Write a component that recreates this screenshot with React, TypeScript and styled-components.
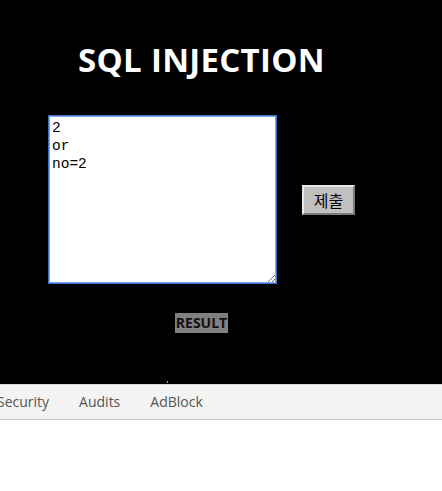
import { useEffect, useRef } from "react";
import styled, { createGlobalStyle } from "styled-components";

const GlobalStyle = createGlobalStyle`
  html, body {
    margin: 0;
    padding: 0;
    background: #ffffff;
  }
  #root {
    width: 442px;
    height: 491px;
    overflow: hidden;
  }
`;

const Page = styled.div`
  display: flex;
  flex-direction: column;
  width: 442px;
  height: 491px;
`;

const Stage = styled.div`
  background: #000000;
  height: 384px;
  flex-shrink: 0;
`;

const Column = styled.div`
  width: 403px;
  display: flex;
  flex-direction: column;
  align-items: center;
`;

const Title = styled.h1`
  margin: 40px 0 0;
  color: #ffffff;
  font-family: "Open Sans", "Noto Sans", sans-serif;
  font-weight: 700;
  font-size: 33px;
  line-height: 40px;
  letter-spacing: 0.3px;
`;

const FormRow = styled.div`
  margin-top: 35px;
  display: flex;
  align-items: center;
  gap: 25px;
`;

const Query = styled.textarea`
  box-sizing: border-box;
  width: 229px;
  height: 169px;
  margin: 0;
  padding: 3px 3px;
  border: 1px solid #3c70c8;
  box-shadow: inset 0 0 0 1px #7ea8e6;
  background: #ffffff;
  color: #000000;
  caret-color: #000000;
  font-family: "Liberation Mono", "DejaVu Sans Mono", monospace;
  font-size: 14.5px;
  line-height: 18px;
  outline: none;
`;

const Submit = styled.button`
  box-sizing: border-box;
  width: 53px;
  height: 30px;
  padding: 0;
  background: #c0c0c0;
  border: 2px solid;
  border-color: #e8e8e8 #7a7a7a #7a7a7a #e8e8e8;
  color: #000000;
  font-family: "Noto Sans CJK KR", sans-serif;
  font-size: 16px;
  line-height: 1;
`;

const Result = styled.span`
  margin-top: 29px;
  background: #808080;
  color: #111111;
  font-family: "Open Sans", "Noto Sans", sans-serif;
  font-weight: 700;
  font-size: 14px;
  line-height: 20px;
  padding: 0 1px;
`;

const Caret = styled.div`
  margin: 48px 0 0 -68px;
  width: 1px;
  height: 2px;
  background: #6fd13a;
`;

const TabBar = styled.div`
  height: 34px;
  background: #f3f3f3;
  border-top: 1px solid #dcdcdc;
  border-bottom: 1px solid #cccccc;
  display: flex;
  align-items: center;
  margin-left: -18px;
  flex-shrink: 0;
`;

const Tab = styled.span`
  padding: 0 15px;
  color: #555555;
  font-family: "Open Sans", "Noto Sans", sans-serif;
  font-size: 14px;
  line-height: 20px;
`;

const Blank = styled.div`
  flex: 1;
  background: #ffffff;
`;

export default function App() {
  const queryRef = useRef<HTMLTextAreaElement>(null);

  useEffect(() => {
    const el = queryRef.current;
    if (el) {
      el.focus();
      el.setSelectionRange(el.value.length, el.value.length);
    }
  }, []);

  return (
    <>
      <GlobalStyle />
      <Page>
        <Stage>
          <Column>
            <Title>SQL INJECTION</Title>
            <FormRow>
              <Query ref={queryRef} defaultValue={"2\nor\nno=2"} />
              <Submit>제출</Submit>
            </FormRow>
            <Result>RESULT</Result>
            <Caret />
          </Column>
        </Stage>
        <TabBar>
          <Tab>Security</Tab>
          <Tab>Audits</Tab>
          <Tab>AdBlock</Tab>
        </TabBar>
        <Blank />
      </Page>
    </>
  );
}
